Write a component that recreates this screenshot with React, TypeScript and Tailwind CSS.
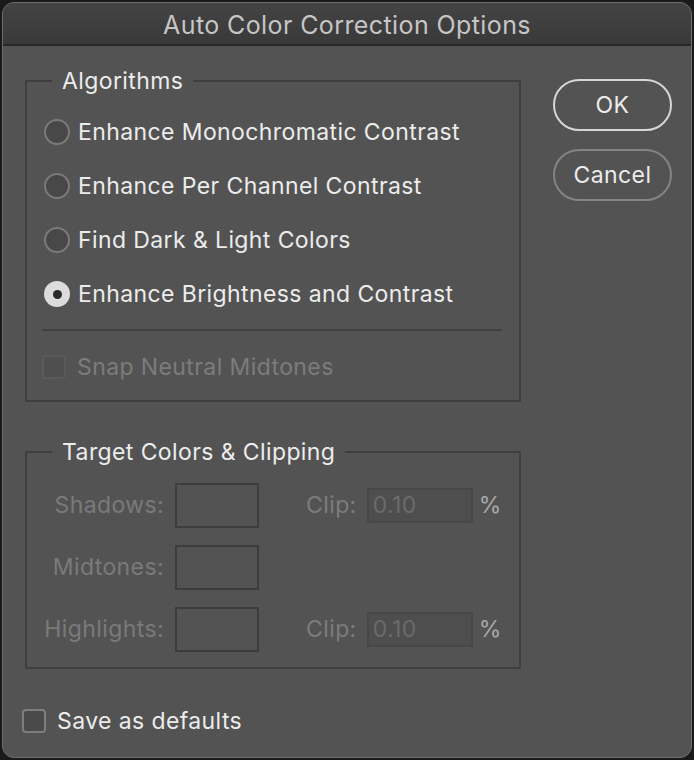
import React from 'react'

const FONT = { fontFamily: 'Inter, "Noto Sans", "Liberation Sans", sans-serif' }

const ALGORITHMS = [
  'Enhance Monochromatic Contrast',
  'Enhance Per Channel Contrast',
  'Find Dark & Light Colors',
  'Enhance Brightness and Contrast',
]

function Radio({ checked }: { checked?: boolean }) {
  if (checked) {
    return (
      <span className="flex h-[26px] w-[26px] shrink-0 items-center justify-center rounded-full bg-[#dcdcdc]">
        <span className="h-[9px] w-[9px] rounded-full bg-[#2a2a2a]" />
      </span>
    )
  }
  return <span className="h-[26px] w-[26px] shrink-0 rounded-full border-2 border-[#7a7a7a] bg-[#484848]" />
}

function TargetRow({ label, clip }: { label: string; clip?: boolean }) {
  return (
    <div className="flex h-[44px] items-center">
      <span className="w-[137px] whitespace-nowrap text-right text-[#7a7a7a]">{label}</span>
      <span className="ml-[11px] h-[45px] w-[84px] shrink-0 border-2 border-[#3d3d3d]" />
      {clip && (
        <div className="ml-[47px] flex items-center">
          <span className="text-[#7c7c7c]">Clip:</span>
          <span className="ml-[10px] flex h-[35px] w-[106px] items-center border-2 border-[#474747] bg-[#4e4e4e] pl-[4px] text-[#6b6b6b]">
            0.10
          </span>
          <span className="ml-[6px] text-[#a8a8a8]">%</span>
        </div>
      )}
    </div>
  )
}

export default function App() {
  return (
    <div className="h-[760px] w-[694px] bg-[#1a1a1a] p-[2px]" style={FONT}>
      <div className="flex h-[756px] flex-col overflow-hidden rounded-[12px] border border-[#6e6e6e] bg-[#535353] text-[23px] leading-[26px] tracking-[0.4px]">
        <div className="flex h-[43px] shrink-0 items-center justify-center border-b-2 border-[#262626] bg-gradient-to-b from-[#444444] to-[#393939] pt-[3px] text-[25px] tracking-[0.4px] text-[#c6c6c6]">
          Auto Color Correction Options
        </div>

        <div className="flex pl-[19px] pt-[22px]">
          <div className="flex w-[499px] flex-col">
            <fieldset className="ml-[3px] border-2 border-[#3f3f3f]">
              <legend className="ml-[25px] px-[10px] text-[#ececec]">Algorithms</legend>
              <div className="pl-[15px] pr-[17px] pt-[11px] pb-[6px]">
                {ALGORITHMS.map((name, i) => (
                  <div key={name} className="flex h-[54px] items-center pl-[2px]">
                    <Radio checked={i === 3} />
                    <span className="ml-[8px] text-[#ececec]">{name}</span>
                  </div>
                ))}
                <div className="mt-[8px] h-[2px] bg-[#3f3f3f]" />
                <div className="mt-[9px] flex h-[54px] items-center">
                  <span className="h-[24px] w-[24px] rounded-[4px] border-2 border-[#5a5a5a] bg-[#4f4f4f]" />
                  <span className="ml-[11px] text-[#7c7c7c]">Snap Neutral Midtones</span>
                </div>
              </div>
            </fieldset>

            <fieldset className="ml-[3px] mt-[37px] border-2 border-[#3f3f3f]">
              <legend className="ml-[25px] px-[10px] text-[#ececec]">Target Colors &amp; Clipping</legend>
              <div className="flex flex-col gap-[18px] pt-[18px] pb-[16px]">
                <TargetRow label="Shadows:" clip />
                <TargetRow label="Midtones:" />
                <TargetRow label="Highlights:" clip />
              </div>
            </fieldset>

            <div className="mt-[39px] flex h-[26px] items-center">
              <span className="h-[24px] w-[24px] rounded-[4px] border-2 border-[#7e7e7e] bg-[#4a4a4a]" />
              <span className="ml-[11px] text-[#ececec]">Save as defaults</span>
            </div>
          </div>

          <div className="ml-[32px] flex flex-col gap-[18px] pt-[11px]">
            <button className="h-[52px] w-[119px] rounded-full border-2 border-[#d6d6d6] text-[#ececec]">OK</button>
            <button className="h-[52px] w-[119px] rounded-full border-2 border-[#848484] text-[#ececec]">Cancel</button>
          </div>
        </div>
      </div>
    </div>
  )
}
